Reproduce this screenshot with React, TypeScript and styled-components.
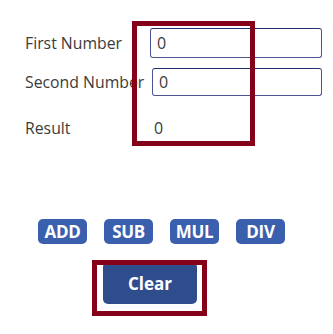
import React from 'react'
import styled, { createGlobalStyle } from 'styled-components'

const GlobalStyle = createGlobalStyle`
  html, body {
    margin: 0;
    padding: 0;
    background: #ffffff;
    font-family: "Open Sans", "Noto Sans", sans-serif;
  }
`

const App: React.FC = () => {
  return (
    <Screen>
      <GlobalStyle />
      <Form>
        <FieldRow top={28} height={30}>
          <Label>First Number</Label>
          <NumberInput left={150} defaultValue="0" />
        </FieldRow>
        <FieldRow top={10} height={28}>
          <Label>Second Number</Label>
          <NumberInput left={152} defaultValue="0" />
        </FieldRow>
        <FieldRow top={18} height={28}>
          <Label>Result</Label>
          <ResultValue>0</ResultValue>
        </FieldRow>
      </Form>
      <OpRow>
        <OpButton>ADD</OpButton>
        <OpButton>SUB</OpButton>
        <OpButton>MUL</OpButton>
        <OpButton>DIV</OpButton>
      </OpRow>
      <ClearRow>
        <ClearButton>Clear</ClearButton>
      </ClearRow>
      <Highlight style={{ left: 132, top: 21, width: 123, height: 125 }} />
      <Highlight style={{ left: 92, top: 260, width: 115, height: 56 }} />
    </Screen>
  )
}

const Screen = styled.div`
  position: relative;
  width: 333px;
  height: 334px;
  overflow: hidden;
  background: #ffffff;
`

const Form = styled.div`
  display: flex;
  flex-direction: column;
  padding-left: 25px;
`

const FieldRow = styled.div<{ top: number; height: number }>`
  display: flex;
  align-items: center;
  margin-top: ${(p) => p.top}px;
  height: ${(p) => p.height}px;
`

const Label = styled.div`
  width: 125px;
  flex: none;
  font-size: 15.8px;
  color: #3b3b3b;
  white-space: nowrap;
`

const NumberInput = styled.input<{ left: number }>`
  box-sizing: border-box;
  margin-left: ${(p) => p.left - 150}px;
  width: ${(p) => 322 - p.left}px;
  height: 100%;
  border: 1px solid #4a5596;
  border-top-color: #23306f;
  border-radius: 3px;
  padding: 0 0 0 6px;
  font-family: inherit;
  font-size: 16px;
  color: #3b3b3b;
  background: #ffffff;
  outline: none;
`

const ResultValue = styled.div`
  padding-left: 4px;
  font-size: 16px;
  color: #3b3b3b;
`

const OpRow = styled.div`
  display: flex;
  gap: 17px;
  margin-top: 77px;
  padding-left: 38px;
`

const OpButton = styled.button`
  box-sizing: border-box;
  width: 49px;
  height: 25px;
  border: none;
  border-radius: 5px;
  background: #3a5fad;
  color: #ffffff;
  font-family: "Open Sans", "Noto Sans", sans-serif;
  font-weight: 700;
  font-size: 17px;
  letter-spacing: -0.3px;
  padding: 0;
`

const ClearRow = styled.div`
  display: flex;
  padding-left: 103px;
  margin-top: 18px;
`

const ClearButton = styled.button`
  box-sizing: border-box;
  width: 94px;
  height: 42px;
  border: none;
  border-radius: 5px;
  background: #2f4d8d;
  color: #ffffff;
  font-family: "Open Sans", "Noto Sans", sans-serif;
  font-weight: 700;
  font-size: 17px;
  padding: 0;
`

const Highlight = styled.div`
  position: absolute;
  box-sizing: border-box;
  border: 5px solid #850019;
  pointer-events: none;
`

export default App
